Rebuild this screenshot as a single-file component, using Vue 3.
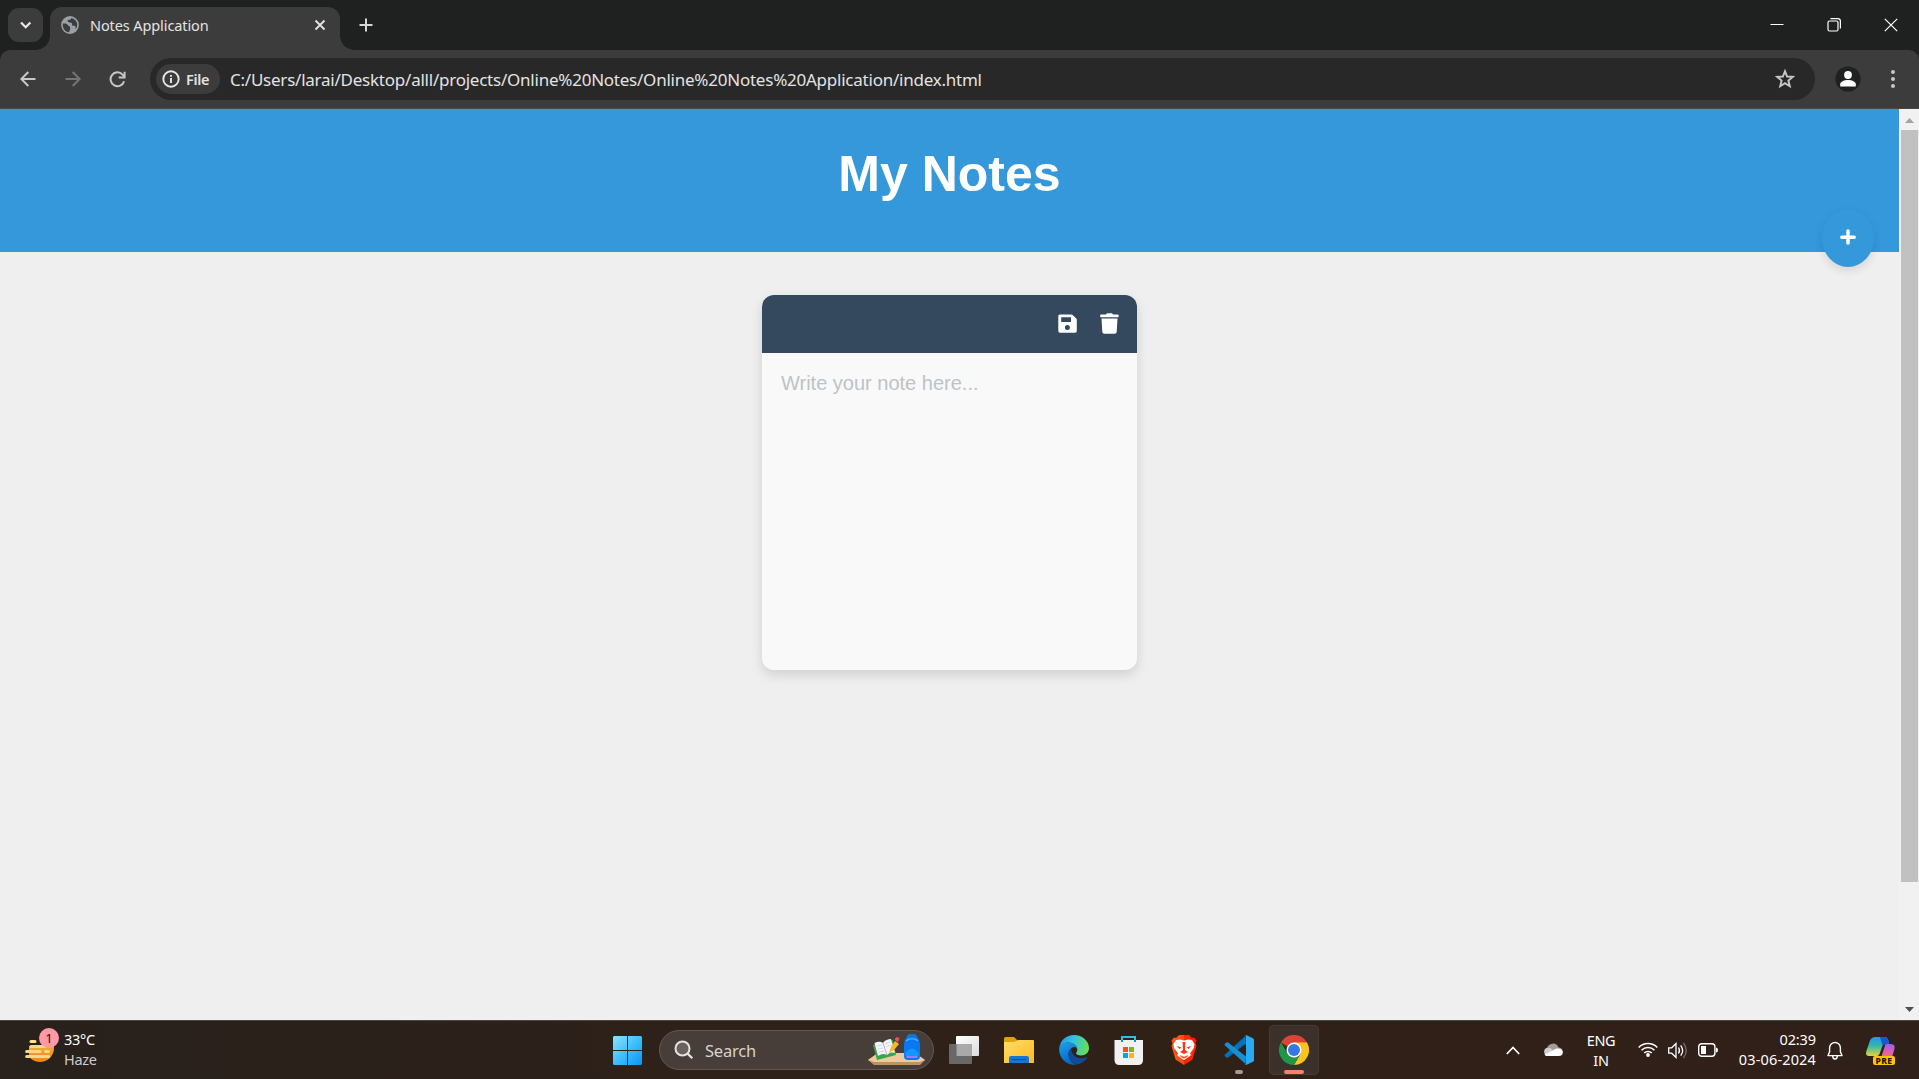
<script setup>
const tabTitle = 'Notes Application'
const address = 'C:/Users/larai/Desktop/alll/projects/Online%20Notes/Online%20Notes%20Application/index.html'
</script>

<template>
  <div class="screen">
    <div class="tabstrip">
      <div class="tabsearch">
        <svg width="35" height="34" viewBox="0 0 35 34"><path d="M13 14.5l4.7 4.7 4.7-4.7" fill="none" stroke="#e8e8e8" stroke-width="2.2" /></svg>
      </div>
      <div class="tab">
        <svg class="globe" width="18" height="18" viewBox="0 0 18 18">
          <circle cx="9" cy="9" r="8.9" fill="#9aa0a6" />
          <path d="M1.8 7.5c2.8-.3 4.4 0 5.1 1.7.5 1.2 2.2.6 2.2 2v2.4c0 .8-.9 1-1 2.6C4 16 1.300 12 1.800 7.500zM10.300 1.900c-.2 1.700-1 1.900-2.400 1.900-1.500 0-1.600 1.100-.9 1.900.9 1.100 3.100.4 3.800 1.400.7 1.100-.5 2.400 1 2.700 1 .2 2.200-.2 2.700.9.300.8-.2 1.800.2 2.200C18 9 15.800 3 10.300 1.900z" fill="#3c3c3c" />
        </svg>
        <span class="tabtitle">{{ tabTitle }}</span>
        <svg class="tabclose" width="12" height="12" viewBox="0 0 12 12"><path d="M1.500 1.500l9 9M10.500 1.500l-9 9" stroke="#e3e3e3" stroke-width="1.900" /></svg>
      </div>
      <svg class="newtab" width="14" height="14" viewBox="0 0 14 14"><path d="M7 .5v13M.5 7h13" stroke="#d6d6d6" stroke-width="2" /></svg>
      <div class="winbuttons">
        <svg width="14" height="14" viewBox="0 0 14 14"><path d="M.5 6.500h13" stroke="#fff" /></svg>
        <svg width="14" height="14" viewBox="0 0 14 14"><rect x="1" y="3" width="10" height="10" rx="1.500" fill="none" stroke="#fff" stroke-width="1.200" /><path d="M3.500.6h7.300a2.600 2.600 0 0 1 2.600 2.600v7.300" fill="none" stroke="#fff" stroke-width="1.200" /></svg>
        <svg width="14" height="14" viewBox="0 0 14 14"><path d="M.8.8l12.400 12.400M13.200.8L.8 13.200" stroke="#fff" stroke-width="1.200" /></svg>
      </div>
    </div>

    <div class="toolbar">
      <svg class="nav back" width="16" height="16" viewBox="0 0 16 16"><path d="M15.500 8H1.500M8.300 1L1.400 8l6.900 7" fill="none" stroke="#c7c7c7" stroke-width="2" /></svg>
      <svg class="nav fwd" width="16" height="16" viewBox="0 0 16 16"><path d="M.5 8h14M7.700 1l6.900 7-6.900 7" fill="none" stroke="#757575" stroke-width="2" /></svg>
      <svg class="nav reload" width="17" height="17" viewBox="0 0 17 17"><path d="M15.100 10.200A6.900 6.900 0 1 1 13.600 3.600l1.700 1.900" fill="none" stroke="#c7c7c7" stroke-width="2" /><path d="M15.600.7v5.900H9.700" fill="none" stroke="#c7c7c7" stroke-width="2" /></svg>
      <div class="omnibox">
        <div class="chip">
          <svg width="18" height="18" viewBox="0 0 18 18"><circle cx="9" cy="9" r="7.700" fill="none" stroke="#e8e8e8" stroke-width="1.900" /><path d="M9 8v5M9 5v1.700" stroke="#e8e8e8" stroke-width="1.900" /></svg>
          <span>File</span>
        </div>
        <span class="url">{{ address }}</span>
        <svg class="star" width="20" height="20" viewBox="0 0 20 20"><path d="M10 2.200l2.100 5.300 5.700.4-4.400 3.700 1.400 5.600-4.800-3-4.800 3 1.400-5.600-4.400-3.700 5.700-.4z" fill="none" stroke="#c7c7c7" stroke-width="1.900" /></svg>
      </div>
      <svg class="avatar" width="26" height="26" viewBox="0 0 26 26"><circle cx="13" cy="13" r="12.600" fill="#1f2020" /><circle cx="13" cy="9" r="3.900" fill="#fff" /><path d="M5.200 20.400v-2.100c0-3 4.500-4.400 7.800-4.400s7.800 1.400 7.800 4.400v2.100z" fill="#fff" /></svg>
      <svg class="dots" width="6" height="20" viewBox="0 0 6 20"><g fill="#c7c7c7"><circle cx="3" cy="3" r="2" /><circle cx="3" cy="10" r="2" /><circle cx="3" cy="17" r="2" /></g></svg>
    </div>

    <div class="viewport">
      <main class="page">
        <header class="banner"><h1>My Notes</h1></header>
        <button class="add">
          <svg width="16" height="16" viewBox="0 0 16 16"><path d="M8 2v12M1.800 8.200h12.400" stroke="#fff" stroke-width="3.500" stroke-linecap="round" /></svg>
        </button>
        <section class="note">
          <div class="notebar">
            <svg width="19" height="19" viewBox="0 0 19 19"><path fill-rule="evenodd" d="M2 .4h11.300c.5 0 1 .2 1.300.5l3.700 3.700c.3.300.5.800.5 1.300V17a1.700 1.700 0 0 1-1.700 1.700H2A1.700 1.700 0 0 1 .3 17V2.100C.3 1.200 1 .4 2 .4zM3.200 3.200v4.900h9.800V3.200zM9.400 11a2.500 2.500 0 1 0 0 5 2.500 2.500 0 0 0 0-5z" fill="#fff" /></svg>
            <svg width="19" height="21" viewBox="0 0 19 21"><path d="M6.300.9c.2-.4.600-.6 1-.6h4.400c.4 0 .8.200 1 .6l.3.600h4.700c.6 0 1 .4 1 .9v1.200c0 .4-.3.700-.7.700H1a.8.800 0 0 1-.8-.8V2.400c0-.5.500-.9 1-.9H6zM1.500 5.500h16l-.8 13.400a2 2 0 0 1-2 1.800H4.300a2 2 0 0 1-2-1.800z" fill="#fff" /></svg>
          </div>
          <textarea class="notetext" placeholder="Write your note here..."></textarea>
        </section>
      </main>
      <div class="scrollbar">
        <svg width="20" height="21" viewBox="0 0 20 21"><path d="M6 14l4.500-5 4.500 5z" fill="#a3a3a3" /></svg>
        <div class="thumb"></div>
        <svg class="down" width="20" height="21" viewBox="0 0 20 21"><path d="M6 8h9l-4.500 5z" fill="#505050" /></svg>
      </div>
    </div>

    <footer class="taskbar">
      <div class="weather">
        <svg width="36" height="36" viewBox="0 0 36 36">
          <defs><linearGradient id="sun" x1="0" y1="0" x2="0" y2="1"><stop offset="0" stop-color="#ffc843" /><stop offset="1" stop-color="#f08218" /></linearGradient></defs>
          <circle cx="15" cy="21" r="14" fill="url(#sun)" />
          <path d="M0 3h18v16H0zM0 19h4v13H0z" fill="#29211b" />
          <path d="M6 14.500h4" stroke="#ffe28a" stroke-width="3" stroke-linecap="round" />
          <path d="M6 19.500h14M1.600 24.500h13.500M20.500 24.500h3M1.600 29.500h22" stroke="#f2d78c" stroke-width="3" stroke-linecap="round" />
          <circle cx="24" cy="11" r="10" fill="#ff99a4" />
          <text x="24" y="15.500" text-anchor="middle" font-size="13" fill="#1d1412">1</text>
        </svg>
        <div class="lines"><span>33°C</span><span class="dim">Haze</span></div>
      </div>

      <svg class="start" width="29" height="29" viewBox="0 0 29 29">
        <defs><linearGradient id="win" gradientUnits="userSpaceOnUse" x1="0" y1="0" x2="29" y2="29"><stop offset="0" stop-color="#8be2ff" /><stop offset=".5" stop-color="#3fc0fb" /><stop offset="1" stop-color="#0a93f5" /></linearGradient></defs>
        <path d="M1 0h13v14H0V1zM15 0h13l1 1v13H15zM0 15h14v14H1l-1-1zM15 15h14v13l-1 1H15z" fill="url(#win)" />
      </svg>

      <div class="search">
        <svg width="20" height="20" viewBox="0 0 20 20"><circle cx="8.500" cy="8.500" r="7" fill="#6b625e" stroke="#e5e3e2" stroke-width="2" /><path d="M13.600 13.600l4.700 4.700" stroke="#e5e3e2" stroke-width="2.200" /></svg>
        <span>Search</span>
        <svg class="art" width="58" height="32" viewBox="0 0 58 32">
          <path d="M0 26l10-7h37l10 7-5 5H6z" fill="#bf935f" /><path d="M0 26l10-7h37l10 7-5 2H6z" fill="#edca9a" />
          <path d="M5 11l20-5 3 15-19 5z" fill="#38a552" /><path d="M6.500 9c4-2 6-1.500 8.500 0 2-3 5-4 8-4l4 14c-4-1-6 0-8 2-3-2-6-1-9 1z" fill="#f4f4fa" /><path d="M15 9l4 12" stroke="#b9b6c8" /><path d="M9 12l5-1M10 15l5-1M11 18l5-1M17 10l5-2M18 13l5-2" stroke="#d0cede" stroke-width=".8" />
          <path d="M21 19l2-6 4-6 4 3-5 6z" fill="#ffb52a" /><path d="M26.500 5.500l2-2.500 3 1-1.500 4.500z" fill="#f0524a" />
          <path d="M39 5q1-5 5-5t5 5" fill="none" stroke="#1878d5" stroke-width="1.500" />
          <path d="M36 12c0-7 3-11 8-11s8 4 8 11v10a4 4 0 0 1-4 4h-8a4 4 0 0 1-4-4z" fill="#0a78f2" /><path d="M38 7c3-3 9-3 12 0" fill="none" stroke="#4cc0ff" stroke-width="1.200" /><path d="M37.500 19q6.500-9 13 0v3h-13z" fill="#0f98ff" /><path d="M38.500 23h11" stroke="#a07bf3" stroke-width="2" />
        </svg>
      </div>

      <div class="apps">
        <div class="app">
          <svg width="30" height="30" viewBox="0 0 30 30"><defs><linearGradient id="tv" x2="1" y2="1"><stop stop-color="#fff" /><stop offset="1" stop-color="#dcdcdc" /></linearGradient></defs><rect x="7" y="1" width="23" height="20" rx="1" fill="url(#tv)" /><rect y="9" width="23" height="20" rx="1" fill="#686868" /><path d="M7.500 9h15.500v12H7.500z" fill="#a9a9a9" /></svg>
        </div>
        <div class="app">
          <svg width="30" height="30" viewBox="0 0 30 30"><defs><linearGradient id="fo" x2="1" y2="1"><stop stop-color="#ffdd69" /><stop offset="1" stop-color="#fdba23" /></linearGradient></defs><path d="M0 3.500Q0 2 1.500 2H10l3 3v5H0z" fill="#e3a007" /><path d="M0 7h10l4-2h15q1 0 1 1v22H0z" fill="url(#fo)" /><path d="M5 28v-5q0-2 2-2h16q2 0 2 2v5z" fill="#1478d2" /><path d="M8.500 24.500h13" stroke="#0a4b91" stroke-linecap="round" /></svg>
        </div>
        <div class="app">
          <svg width="30" height="30" viewBox="0 0 30 30">
            <defs><linearGradient id="ed1" x1="0" y1=".3" x2="1" y2=".5"><stop stop-color="#1b9de2" /><stop offset=".45" stop-color="#35c3df" /><stop offset="1" stop-color="#67e052" /></linearGradient><linearGradient id="ed2" x1="0" y1="0" x2=".4" y2="1"><stop stop-color="#1ea1e6" /><stop offset="1" stop-color="#0566c9" /></linearGradient></defs>
            <path d="M.3 13C1.300 5 7.500 0 15 0c8.500 0 15 6.200 15 13 0 4.600-3.500 7.500-8 7.500-3 0-5-1.100-5-2.200 0-.9 1.300-1.500 1.300-3.800C18.300 10.500 14 7.600 9.500 7.600 5.500 7.600 2.200 9.500.3 13z" fill="url(#ed1)" />
            <path d="M.1 14C1 9.500 5 7.600 9.500 7.600c4.500 0 8.300 2.700 8.700 6.400-.8-1.700-2.500-2.500-4.200-1.800-3.200 1.400-5 4.500-4.300 8.600.8 4.600 4.300 8.400 8.300 8.900C8 31 .1 24 .1 14z" fill="url(#ed2)" />
            <path d="M12.800 13c-3.800 2.400-4.300 7.200-1.900 11.200 2.100 3.600 5.600 5.500 8.600 5 4-1 7.200-3.500 8.800-6.600.3-.7-.2-1-.8-.7-4.500 2.300-9.500 1.700-12.600-1.600-2.100-2.300-2.900-5-2.100-7.300z" fill="#114a97" />
          </svg>
        </div>
        <div class="app">
          <svg width="30" height="30" viewBox="0 0 30 30"><path d="M8 7V2h13v5" fill="none" stroke="#35b9f0" stroke-width="2" /><path d="M.5 5h28.500v20q0 5-5 5h-18.500q-5 0-5-5z" fill="#f1f1f1" /><path d="M8 5v2M21 5v2" stroke="#1b8fc2" stroke-width="2" /><path d="M9 12h5v5H9z" fill="#f25022" /><path d="M15 12h5v5h-5z" fill="#7fba00" /><path d="M9 18h5v5H9z" fill="#00a4ef" /><path d="M15 18h5v5h-5z" fill="#ffb900" /></svg>
        </div>
        <div class="app">
          <svg width="26" height="30" viewBox="0 0 26 30"><defs><linearGradient id="br"><stop stop-color="#ff5a1c" /><stop offset=".48" stop-color="#ff4a12" /><stop offset=".52" stop-color="#ff2500" /><stop offset="1" stop-color="#ff2000" /></linearGradient></defs>
            <path d="M8 0h10l3 3 2-.5 2.500 3-1 2.500 1 3-4 13.500-8.500 5.500-8.500-5.500L.5 11l1-3-1-2.500 2.500-3L5 3z" fill="url(#br)" />
            <path d="M13 5.500l4-1 4 .5 2.500 4-.5 4-3 4 .5 3-3 2L13 25l-4.500-3-3-2 .5-3-3-4L2.500 9 5 5l4-.5z" fill="#fff" />
            <path d="M11.500 7h3l-.5 8 3 2-4 2-4-2 3-2zM5.500 11l5 1.500-2 1.500zM20.500 11l-5 1.500 2 1.500zM9 20l4 2 4-2-1 2-3 1.500-3-1.500zM3 15l4 3-1 3zM23 15l-4 3 1 3z" fill="#fc3b0b" /></svg>
        </div>
        <div class="app vscode">
          <svg width="30" height="30" viewBox="0 0 30 30"><path d="M22 8.500L3.500 23 1 21.500q-1-1 0-2L21.500.8z" fill="#0072b8" /><path d="M22 21.500L3.500 7 1 8.500q-1 1 0 2L21.500 29z" fill="#168fd6" /><path d="M22 0l7 3.200q1 .5 1 1.500v20.600q0 1-1 1.500L22 30q-1 .2-1.600-.6 1.600.8 1.600-1V1.600q0-1.800-1.600-1Q21-.2 22 0z" fill="#29aaf4" /></svg>
        </div>
        <div class="app chrome">
          <svg width="30" height="30" viewBox="0 0 30 30"><path d="M15 15L2 7.500A15 15 0 0 1 28 7.500z" fill="#dc4435" /><path d="M15 7.500h13A15 15 0 0 1 15 30l6.500-11.200z" fill="#fcc31e" /><path d="M2 7.500A15 15 0 0 0 15 30l6.500-11.200L15 15 8.500 18.800z" fill="#229648" /><circle cx="15" cy="15" r="7.500" fill="#fff" /><circle cx="15" cy="15" r="6" fill="#3578e5" /></svg>
        </div>
      </div>

      <div class="tray">
        <svg class="chev" width="14" height="9" viewBox="0 0 14 9"><path d="M.8 8L7 1.500 13.200 8" fill="none" stroke="#fff" stroke-width="1.700" /></svg>
        <svg class="cloud" width="20" height="13" viewBox="0 0 20 13"><path d="M4 5.500A6 6 0 0 1 15.500 4.500 4.300 4.300 0 0 1 19.800 9L10 11z" fill="#a39c99" /><path d="M4.300 4.700c2.200-.3 3.700.7 5.500 1.800L5 12.500h-.8a4 4 0 0 1 .1-7.800z" fill="#d2cecd" /><path d="M1.500 11.500l9-4.500c2.500-1.200 4-1.700 6-1.200 4.600 1.200 4.300 7.200-.5 7.200H4.200c-1 0-2-.5-2.700-1.500z" fill="#fff" /></svg>
        <div class="lines lang"><span>ENG</span><span>IN</span></div>
        <svg class="wifi" width="20" height="15" viewBox="0 0 20 15"><g fill="none" stroke="#fff" stroke-width="1.500"><path d="M.7 5.500a13 13 0 0 1 18.600 0M3.500 8.300a9.200 9.200 0 0 1 13 0M6.200 11a5.400 5.400 0 0 1 7.600 0" /></g><circle cx="10" cy="13" r="1.900" fill="#fff" /></svg>
        <svg class="vol" width="20" height="17" viewBox="0 0 20 17"><g fill="none" stroke="#fff" stroke-width="1.300"><path d="M.7 5.800h3L8 1.600v13.800l-4.300-4.200h-3zM10.500 5.500q2 3 0 6M12.700 3.300q3.800 5.200 0 10.400" /><path d="M15.500 1q5.500 7.500 0 15" stroke="#756b67" /></g></svg>
        <svg class="bat" width="20" height="14" viewBox="0 0 20 14"><rect x=".7" y=".7" width="16.200" height="12.600" rx="3" fill="none" stroke="#fff" stroke-width="1.400" /><path d="M3 3h5v8H3zM18 4.500q2 0 2 2.500t-2 2.500z" fill="#fff" /></svg>
        <div class="lines clock"><span>02:39</span><span>03-06-2024</span></div>
        <svg class="bell" width="16" height="19" viewBox="0 0 16 19"><path d="M1 14.600l1.600-3.800V6.900a5.400 5.400 0 0 1 10.800 0v3.900l1.600 3.800zM5.700 15q0 3 2.300 3t2.300-3" fill="none" stroke="#fff" stroke-width="1.400" stroke-linejoin="round" /></svg>
        <div class="copilot">
          <svg width="30" height="24" viewBox="0 0 30 24"><defs><linearGradient id="c1" x2="0" y2="1"><stop stop-color="#2493f2" /><stop offset=".45" stop-color="#31b7a9" /><stop offset="1" stop-color="#e4d33c" /></linearGradient><linearGradient id="c2" x2="0" y2="1"><stop stop-color="#a15af5" /><stop offset=".6" stop-color="#ed6497" /><stop offset="1" stop-color="#fa8b49" /></linearGradient></defs><path d="M9 0h10q2.500 0 3.500 4l.5 3h-4q-2 0-3 3l-2.500 7q-.8 2-2.500 2H3q-4 0-2.600-5L4 3.500Q5.500 0 9 0z" fill="url(#c1)" /><path d="M14 0h5q2.500 0 3.500 4l.5 3h-4q-2 0-2.500 1.500z" fill="#1657d8" /><path d="M19.500 7H25q5 0 3.200 6L26 20q-1 4-4 4h-8z" fill="url(#c2)" /></svg>
          <span>PRE</span>
        </div>
      </div>
    </footer>
  </div>
</template>

<style>
html, body { margin: 0; overflow: hidden; }
</style>

<style scoped>
.screen { width: 1919px; height: 1079px; display: flex; flex-direction: column; overflow: hidden; font-family: "Noto Sans", "Open Sans", sans-serif; color: #fff; background: #1f2120; }
svg { display: block; flex: none; }
span { white-space: nowrap; }

.tabstrip { height: 50px; display: flex; background: #1f2120; flex: none; }
.tabsearch { width: 35px; height: 34px; margin: 8px 0 0 8px; border-radius: 11px; background: #3c3c3c; }
.tab { position: relative; width: 290px; height: 43px; margin: 7px 0 0 7px; border-radius: 12px 12px 0 0; background: #3c3c3c; display: flex; box-sizing: border-box; padding-left: 11px; }
.tab::before, .tab::after { content: ""; position: absolute; bottom: 0; width: 14px; height: 14px; }
.tab::before { left: -14px; background: radial-gradient(circle at 0 0, transparent 13.500px, #3c3c3c 14px); }
.tab::after { right: -14px; background: radial-gradient(circle at 100% 0, transparent 13.500px, #3c3c3c 14px); }
.globe { margin-top: 9px; }
.tabtitle { margin: 8px 0 0 11px; width: 224px; font-size: 14.500px; line-height: 20px; letter-spacing: -.1px; color: #e3e3e3; }
.tabclose { margin-top: 12px; }
.newtab { margin: 18px 0 0 19px; }
.winbuttons { margin: 18px 21px 0 auto; display: flex; gap: 43px; }

.toolbar { height: 59px; flex: none; box-sizing: border-box; border-bottom: 1px solid #4b4947; border-radius: 10px 10px 0 0; background: #3c3c3c; display: flex; align-items: center; }
.back { margin-left: 20px; }
.fwd { margin-left: 29px; }
.reload { margin-left: 28px; }
.omnibox { width: 1665px; height: 42px; margin-left: 24px; border-radius: 21px; background: #282828; display: flex; align-items: center; }
.chip { width: 64px; height: 30px; margin-left: 6px; border-radius: 15px; background: #3c3c3c; display: flex; align-items: center; box-sizing: border-box; padding-left: 6px; }
.chip span { margin: -1px 0 0 6px; font-size: 14.500px; font-weight: 600; letter-spacing: -.3px; color: #e3e3e3; }
.url { margin-left: 10px; font-size: 17px; letter-spacing: -.235px; color: #e3e3e3; }
.star { margin: 0 20px 0 auto; }
.avatar { margin-left: 20px; }
.dots { margin-left: 29px; }

.viewport { height: 911px; flex: none; display: flex; background: #efefef; }
.page { position: relative; width: 1899px; display: flex; flex-direction: column; align-items: center; font-family: "Liberation Sans", Arial, sans-serif; }
.banner { width: 100%; height: 143px; background: #3498db; text-align: center; }
.banner h1 { margin: 37px 0 0; font-size: 50px; line-height: 57px; font-weight: 700; }
.add { position: absolute; left: 1822px; top: 100px; width: 52px; height: 58px; padding: 0 0 3px; border: 0; border-radius: 50%; background: #3498db; box-shadow: 0 4px 10px rgba(0, 0, 0, .1); display: flex; align-items: center; justify-content: center; }
.note { width: 375px; height: 375px; margin-top: 43px; border-radius: 12px; overflow: hidden; background: #f9f9f9; box-shadow: 0 5px 12px rgba(0, 0, 0, .13); display: flex; flex-direction: column; }
.notebar { height: 58px; box-sizing: border-box; flex: none; background: #34495e; display: flex; align-items: center; justify-content: flex-end; gap: 23px; padding: 0 18px 2px 0; }
.notetext { flex: 1; border: 0; margin: 0; padding: 19px 19px; resize: none; outline: 0; background: transparent; font: 20px/23px "Liberation Sans", Arial, sans-serif; }
.notetext::placeholder { color: #bdc3c7; opacity: 1; }

.scrollbar { width: 20px; background: #f1f1f1; display: flex; flex-direction: column; align-items: center; }
.thumb { width: 17px; height: 752px; background: #c1c1c1; }
.down { margin-top: auto; }

.taskbar { height: 59px; flex: none; box-sizing: border-box; border-top: 1px solid #4a4641; background: linear-gradient(90deg, #28211c, #2d211a 33%, #302117 60%, #30201a); display: flex; align-items: flex-start; }
.weather { display: flex; width: 588px; padding: 6px 0 0 25px; box-sizing: border-box; }
.lines { display: flex; flex-direction: column; font-size: 14.500px; line-height: 20px; letter-spacing: -.3px; }
.weather .lines { margin: 2px 0 0 3px; }
.dim { color: #cfcbc9; }
.start { margin: 15px 0 0 25px; }
.search { width: 275px; height: 40px; margin: 9px 0 0 17px; box-sizing: border-box; border: 1px solid #625853; border-radius: 20px; background: #483e39; display: flex; align-items: center; padding: 0 7px 0 14px; }
.search span { margin-left: 11px; font-size: 16.500px; color: #d6d2d0; letter-spacing: -.2px; }
.art { margin-left: auto; }
.apps { display: flex; gap: 5px; margin: 4px 0 0 5px; }
.app { position: relative; width: 50px; height: 50px; display: flex; align-items: center; justify-content: center; }
.chrome { border-radius: 5px; background: #3c302a; box-shadow: inset 0 0 0 1px #463a34; }
.vscode::after, .chrome::after { content: ""; position: absolute; bottom: 1px; width: 8px; height: 4px; border-radius: 2px; background: #a19a96; }
.chrome::after { width: 20px; background: #f4826a; }
.tray { flex: 1; display: flex; align-items: flex-start; }
.chev { margin: 25px 0 0 187px; }
.cloud { margin: 22px 0 0 23px; }
.lang { margin: 9px 0 0 20px; width: 36px; text-align: center; }
.wifi { margin: 21px 0 0 19px; }
.vol { margin: 21px 0 0 10px; }
.bat { margin: 22px 0 0 10px; }
.clock { margin: 8px 0 0 0; width: 98px; text-align: right; letter-spacing: .15px; }
.clock span:first-child { letter-spacing: -.1px; }
.bell { margin: 20px 0 0 11px; }
.copilot { position: relative; margin: 16px 0 0 23px; }
.copilot span { position: absolute; left: 7px; top: 19px; width: 22px; height: 9px; border-radius: 2px; background: #fec40b; color: #1c1509; font-size: 8.500px; line-height: 9px; font-weight: 800; letter-spacing: .5px; text-align: center; }
</style>
